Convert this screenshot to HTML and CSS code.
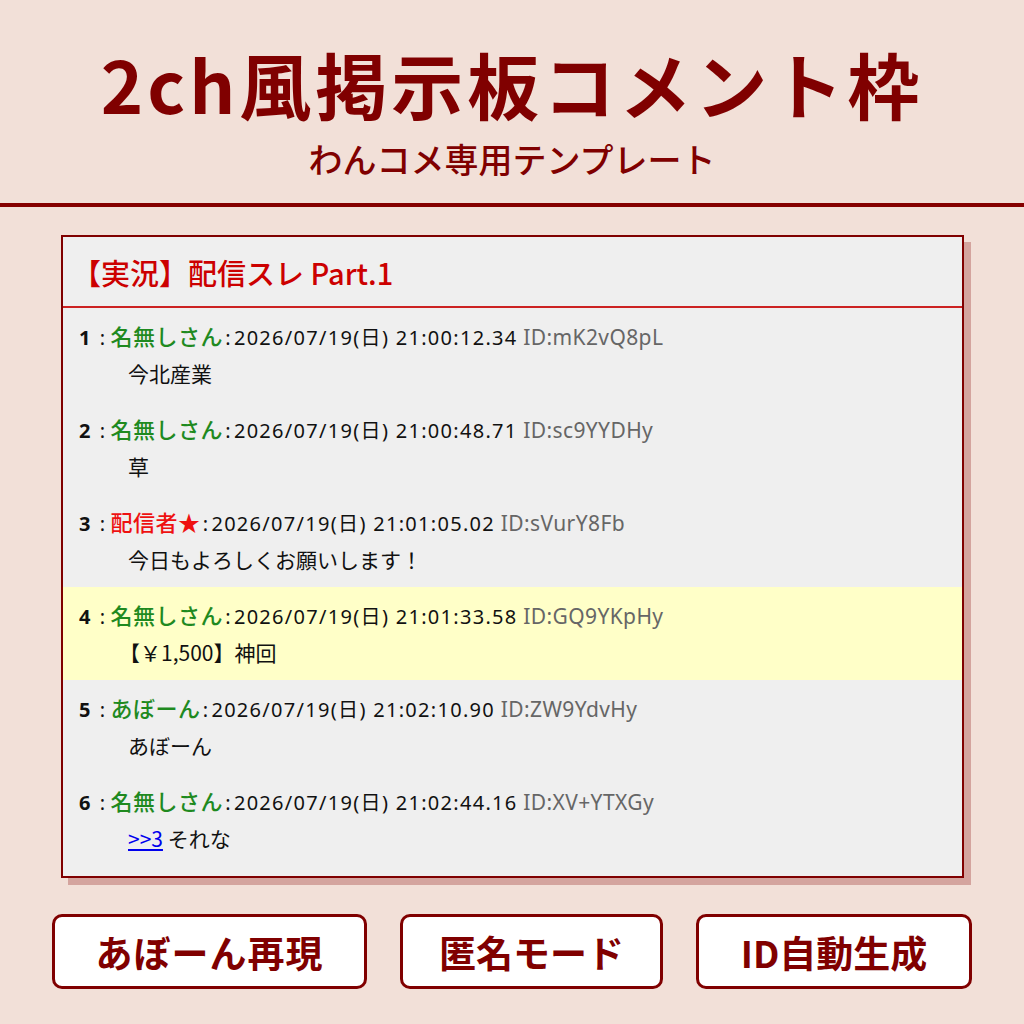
FILE: index.html
```html
<!DOCTYPE html>
<html lang="ja">
<head>
<meta charset="utf-8">
<meta name="viewport" content="width=device-width, initial-scale=1.0">
<link rel="stylesheet" href="styles.css">
<title>2ch風掲示板コメント枠</title>
</head>
<body>
  <div class="page_header">
    <h1 class="main_title">2ch風掲示板コメント枠</h1>
    <div class="sub_title">わんコメ専用テンプレート</div>
  </div>

  <div class="board">
    <div class="board_header">【実況】配信スレ Part.1</div>
    <div class="board_posts">

      <div class="post">
        <div class="post_head"><span class="num">1</span><span class="sep">:</span><span class="name">名無しさん</span><span class="sep2">:</span><span class="date">2026/07/19(日) 21:00:12.34</span> <span class="uid">ID:mK2vQ8pL</span></div>
        <div class="post_body">今北産業</div>
      </div>

      <div class="post">
        <div class="post_head"><span class="num">2</span><span class="sep">:</span><span class="name">名無しさん</span><span class="sep2">:</span><span class="date">2026/07/19(日) 21:00:48.71</span> <span class="uid">ID:sc9YYDHy</span></div>
        <div class="post_body">草</div>
      </div>

      <div class="post">
        <div class="post_head"><span class="num">3</span><span class="sep">:</span><span class="name owner">配信者★</span><span class="sep2">:</span><span class="date">2026/07/19(日) 21:01:05.02</span> <span class="uid">ID:sVurY8Fb</span></div>
        <div class="post_body">今日もよろしくお願いします！</div>
      </div>

      <div class="post highlight">
        <div class="post_head"><span class="num">4</span><span class="sep">:</span><span class="name">名無しさん</span><span class="sep2">:</span><span class="date">2026/07/19(日) 21:01:33.58</span> <span class="uid">ID:GQ9YKpHy</span></div>
        <div class="post_body tight">【￥1,500】神回</div>
      </div>

      <div class="post">
        <div class="post_head"><span class="num">5</span><span class="sep">:</span><span class="name">あぼーん</span><span class="sep2">:</span><span class="date">2026/07/19(日) 21:02:10.90</span> <span class="uid">ID:ZW9YdvHy</span></div>
        <div class="post_body">あぼーん</div>
      </div>

      <div class="post">
        <div class="post_head"><span class="num">6</span><span class="sep">:</span><span class="name">名無しさん</span><span class="sep2">:</span><span class="date">2026/07/19(日) 21:02:44.16</span> <span class="uid">ID:XV+YTXGy</span></div>
        <div class="post_body"><a class="anchor" href="#">&gt;&gt;3</a> それな</div>
      </div>

    </div>
  </div>

  <div class="button_row">
    <div class="button btn_abone">あぼーん再現</div>
    <div class="button btn_anon">匿名モード</div>
    <div class="button btn_id">ID自動生成</div>
  </div>
</body>
</html>
```

FILE: styles.css
```css
body {
    margin: 0;
    background-color: #f2e0d8;
    font-family: "Noto Sans CJK JP", "Noto Sans", sans-serif;
    color: #111;
}

.page_header {
    padding-top: 47px;
    height: 156px;
    border-bottom: 4px solid #850000;
    text-align: center;
    color: #800000;
}

.main_title {
    margin: 0;
    font-size: 72px;
    line-height: 72px;
    font-weight: 700;
    letter-spacing: 4px;
}

.sub_title {
    margin-top: 20px;
    font-size: 34px;
    line-height: 40px;
    font-weight: 500;
}

.board {
    margin: 28px 60px 0 61px;
    border: 2px solid #800000;
    background-color: #efefef;
    box-shadow: 7px 7px 0 #d4a49e;
}

.board_header {
    height: 69px;
    padding-left: 9px;
    border-bottom: 2px solid #cc2222;
    display: flex;
    align-items: center;
    font-size: 29px;
    font-weight: 500;
    color: #cc0000;
}

.board_posts {
    padding-bottom: 10px;
}

.post {
    height: 93px;
    padding: 14px 16px 0 16px;
    box-sizing: border-box;
}

.post.highlight {
    background-color: #ffffc8;
}

.post_head {
    height: 26px;
    line-height: 26px;
    font-family: "Noto Sans", "Noto Sans CJK JP", sans-serif;
    font-size: 20px;
    letter-spacing: 0.4px;
    white-space: nowrap;
}

.num {
    font-weight: 700;
}

.sep {
    margin: 0 5px 0 9px;
}

.sep2 {
    margin: 0 3px 0 2px;
}

.name {
    font-family: "Noto Sans CJK JP", sans-serif;
    font-size: 22px;
    font-weight: 500;
    letter-spacing: 0.5px;
    color: #1f8a1f;
}

.name.owner {
    color: #ee1111;
}

.date {
    letter-spacing: 1.3px;
}

.uid {
    font-size: 21px;
    color: #666;
}

.post_body {
    margin-top: 12px;
    padding-left: 49px;
    line-height: 26px;
    font-size: 21px;
}

.post_body.tight {
    padding-left: 40px;
}

.anchor {
    color: #0000ee;
}

.button_row {
    margin-top: 36px;
    display: flex;
    justify-content: center;
    gap: 33px;
}

.button {
    height: 69px;
    border: 3px solid #800000;
    border-radius: 10px;
    background-color: white;
    display: flex;
    align-items: center;
    justify-content: center;
    font-size: 37px;
    font-weight: 700;
    color: #800000;
}

.btn_abone {
    width: 309px;
    letter-spacing: 1px;
}

.btn_anon {
    width: 257px;
}

.btn_id {
    width: 270px;
}
```
